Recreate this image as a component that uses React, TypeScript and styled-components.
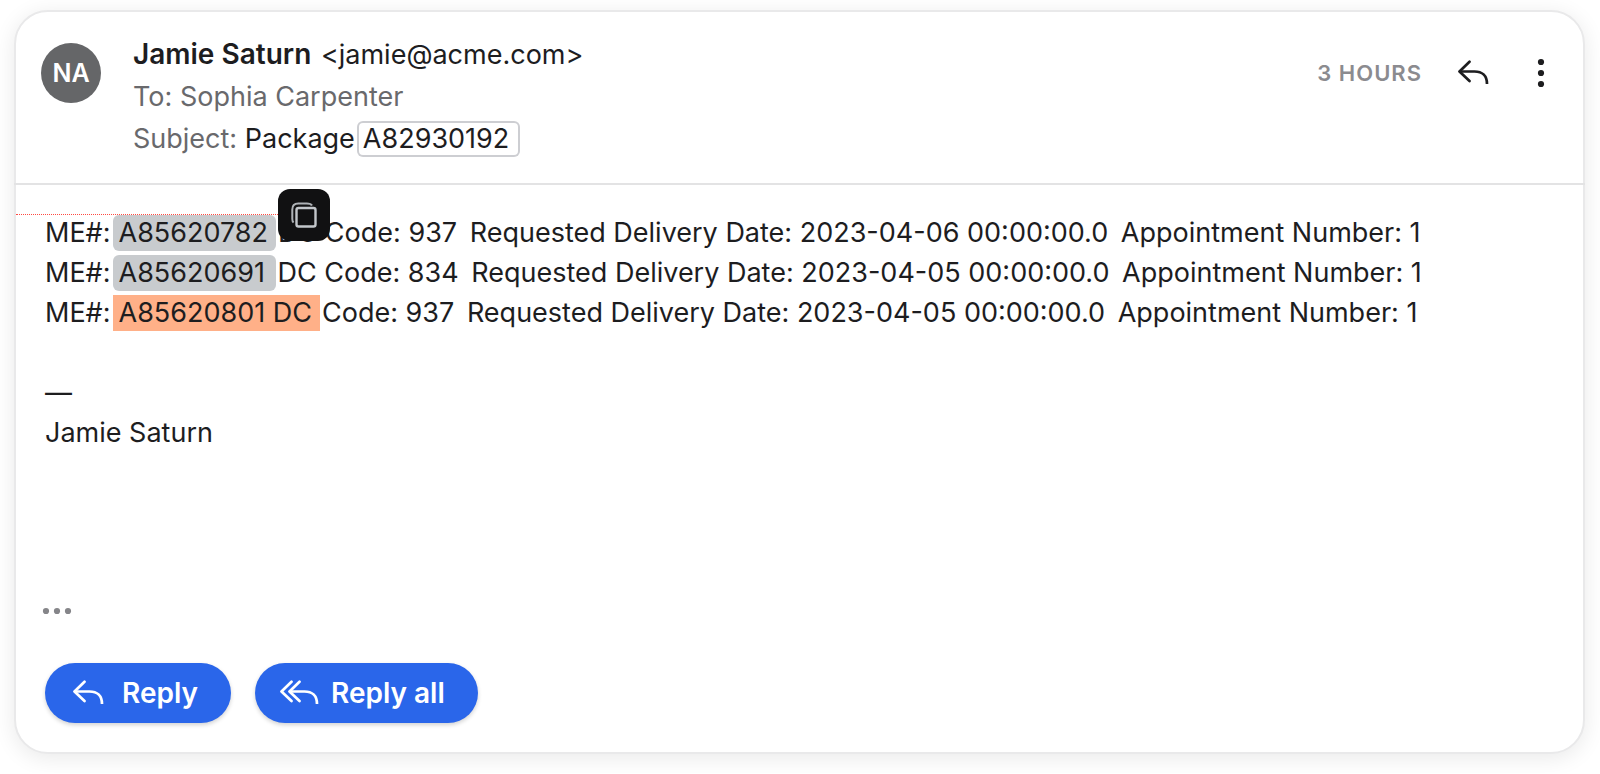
import React from "react";
import styled, { createGlobalStyle } from "styled-components";

const GlobalStyle = createGlobalStyle`
  * { box-sizing: border-box; }
  body {
    margin: 0;
    background: #fff;
    color: #1d1d1f;
    font-family: Inter, "Liberation Sans", sans-serif;
    font-size: 27px;
    line-height: 40px;
  }
`;

const Page = styled.main`
  padding: 10px 15px 19px 14px;
`;

const Card = styled.article`
  border: 2px solid #e9e9ea;
  border-radius: 34px;
  background: #fff;
  box-shadow: 0 4px 22px rgba(0, 0, 0, 0.09);
`;

const Header = styled.header`
  display: flex;
  align-items: flex-start;
  margin: 0 -2px;
  padding: 22px 26px 23px 27px;
  border-bottom: 2px solid #e3e3e4;
`;

const Avatar = styled.div`
  flex: none;
  display: grid;
  place-items: center;
  width: 60px;
  height: 60px;
  margin: 9px 32px 0 0;
  border-radius: 50%;
  background: #656668;
  color: #fff;
  font-size: 25px;
  font-weight: 600;
`;

const Details = styled.div`
  flex: 1;
  min-width: 0;
  line-height: 42px;
`;

const DetailRow = styled.div<{ $muted?: boolean }>`
  height: 42px;
  color: ${(p) => (p.$muted ? "#69696c" : "#1d1d1f")};
`;

const SenderName = styled.strong`
  margin-right: 2px;
  font-size: 28px;
  line-height: 40px;
  font-weight: 600;
`;

const SubjectText = styled.span`
  color: #1d1d1f;
`;

const Chip = styled.span<{ $tone: "outline" | "grey" | "orange" }>`
  position: relative;
  display: inline-block;
  min-width: 163px;
  height: 36px;
  padding: 0 8px 0 6px;
  margin: 0 2px;
  line-height: 36px;
  border-radius: ${(p) => (p.$tone === "orange" ? "0" : "6px")};
  background: ${(p) =>
    ({ outline: "transparent", grey: "#c8cbce", orange: "#ffb088" })[p.$tone]};
  box-shadow: ${(p) =>
    p.$tone === "outline" ? "inset 0 0 0 2px #cdced2" : "none"};
`;

const Actions = styled.div`
  display: flex;
  align-items: center;
  height: 60px;
  margin-top: 9px;
`;

const Age = styled.time`
  margin-right: 22px;
  color: #8b8b8f;
  font-size: 22px;
  font-weight: 600;
  letter-spacing: 1px;
`;

const IconButton = styled.button`
  display: grid;
  place-items: center;
  padding: 0;
  border: 0;
  background: none;
  color: #1d1d1f;
  cursor: pointer;
`;

const ReplyIconButton = styled(IconButton)`
  width: 58px;
  height: 58px;
`;

const MenuButton = styled(IconButton)`
  width: 36px;
  height: 58px;
  margin-left: 21px;
`;

const Body = styled.div`
  position: relative;
  padding: 28px 29px 29px;
`;

const Message = styled.div`
  min-height: 383px;
`;

const Line = styled.p`
  min-height: 40px;
  margin: 0;
`;

const Field = styled.span`
  margin-left: 5px;
`;

const GuideLine = styled.div`
  position: absolute;
  top: 29px;
  left: 0;
  width: 264px;
  border-top: 1px dotted #ff4a42;
`;

const CopyButton = styled.button`
  position: absolute;
  z-index: 1;
  left: calc(100% + 2px);
  top: -26px;
  display: grid;
  place-items: center;
  width: 52px;
  height: 52px;
  padding: 0;
  border: 0;
  border-radius: 12px;
  background: #111112;
  cursor: pointer;
`;

const TrimmedButton = styled(IconButton)`
  width: 30px;
  height: 30px;
  margin-left: -3px;
  color: #858589;
`;

const Buttons = styled.div`
  display: flex;
  gap: 24px;
  margin-top: 37px;
`;

const PillButton = styled.button<{ $wide?: boolean }>`
  display: flex;
  align-items: center;
  gap: ${(p) => (p.$wide ? "12px" : "18px")};
  height: 60px;
  padding: ${(p) => (p.$wide ? "0 33px 0 24px" : "0 33px 0 27px")};
  border: 0;
  border-radius: 30px;
  background: #2a66ea;
  color: #fff;
  font: inherit;
  font-size: 28px;
  font-weight: 600;
  box-shadow: 0 2px 4px rgba(0, 0, 0, 0.18);
  cursor: pointer;
`;

const ReplyArrow = () => (
  <svg width="32" height="26" viewBox="0 0 32 26" fill="none" stroke="currentColor" strokeWidth="2.7" strokeLinejoin="round" aria-hidden="true">
    <path d="M12.5 1.8 2.5 11.5l10 9.5" strokeLinecap="round" />
    <path d="M3 11.5h14.5C25 11.5 30 15.5 30 24" />
  </svg>
);

const ReplyAllArrow = () => (
  <svg width="40" height="26" viewBox="0 0 40 26" fill="none" stroke="currentColor" strokeWidth="2.7" strokeLinejoin="round" aria-hidden="true">
    <path d="M12.5 1.8 2.5 11.5l10 9.5M20.5 1.8 10.5 11.5l10 9.5" strokeLinecap="round" />
    <path d="M11 11.5h14.5C33 11.5 38 15.5 38 24" />
  </svg>
);

const VerticalDots = () => (
  <svg width="8" height="30" viewBox="0 0 8 30" fill="currentColor" aria-hidden="true">
    <circle cx="4" cy="4" r="3.1" />
    <circle cx="4" cy="15" r="3.1" />
    <circle cx="4" cy="26" r="3.1" />
  </svg>
);

const HorizontalDots = () => (
  <svg width="30" height="8" viewBox="0 0 30 8" fill="currentColor" aria-hidden="true">
    <circle cx="4" cy="4" r="3.1" />
    <circle cx="15" cy="4" r="3.1" />
    <circle cx="26" cy="4" r="3.1" />
  </svg>
);

const CopyIcon = () => (
  <svg width="26" height="26" viewBox="0 0 26 26" fill="none" aria-hidden="true">
    <path d="M2.6 20.5C1.7 19.8 1.3 18.6 1.3 17V7.5C1.3 3.5 3.3 1.5 7.3 1.5h8.5c2.4 0 4.4.5 5.2 2" stroke="#aeb2b6" strokeWidth="2" />
    <rect x="5.5" y="6" width="19" height="18.5" rx="2" stroke="#c2c6ca" strokeWidth="2.4" />
  </svg>
);

export default function App() {
  return (
    <>
      <GlobalStyle />
      <Page>
        <Card>
          <Header>
            <Avatar>NA</Avatar>
            <Details>
              <DetailRow>
                <SenderName>Jamie Saturn</SenderName> &lt;jamie@acme.com&gt;
              </DetailRow>
              <DetailRow $muted>To: Sophia Carpenter</DetailRow>
              <DetailRow $muted>
                Subject: <SubjectText>Package<Chip $tone="outline">A82930192</Chip></SubjectText>
              </DetailRow>
            </Details>
            <Actions>
              <Age>3 HOURS</Age>
              <ReplyIconButton aria-label="Reply"><ReplyArrow /></ReplyIconButton>
              <MenuButton aria-label="More options"><VerticalDots /></MenuButton>
            </Actions>
          </Header>
          <Body>
            <GuideLine />
            <Message>
              <Line>
                ME#:
                <Chip $tone="grey">
                  A85620782
                  <CopyButton aria-label="Copy"><CopyIcon /></CopyButton>
                </Chip>
                DC Code: 937 <Field>Requested Delivery Date: 2023-04-06 00:00:00.0</Field>{" "}
                <Field>Appointment Number: 1</Field>
              </Line>
              <Line>
                ME#:
                <Chip $tone="grey">A85620691</Chip>
                DC Code: 834 <Field>Requested Delivery Date: 2023-04-05 00:00:00.0</Field>{" "}
                <Field>Appointment Number: 1</Field>
              </Line>
              <Line>
                ME#:
                <Chip $tone="orange">A85620801 DC</Chip>
                Code: 937 <Field>Requested Delivery Date: 2023-04-05 00:00:00.0</Field>{" "}
                <Field>Appointment Number: 1</Field>
              </Line>
              <Line />
              <Line>—</Line>
              <Line>Jamie Saturn</Line>
            </Message>
            <TrimmedButton aria-label="Show trimmed content"><HorizontalDots /></TrimmedButton>
            <Buttons>
              <PillButton><ReplyArrow />Reply</PillButton>
              <PillButton $wide><ReplyAllArrow />Reply all</PillButton>
            </Buttons>
          </Body>
        </Card>
      </Page>
    </>
  );
}
